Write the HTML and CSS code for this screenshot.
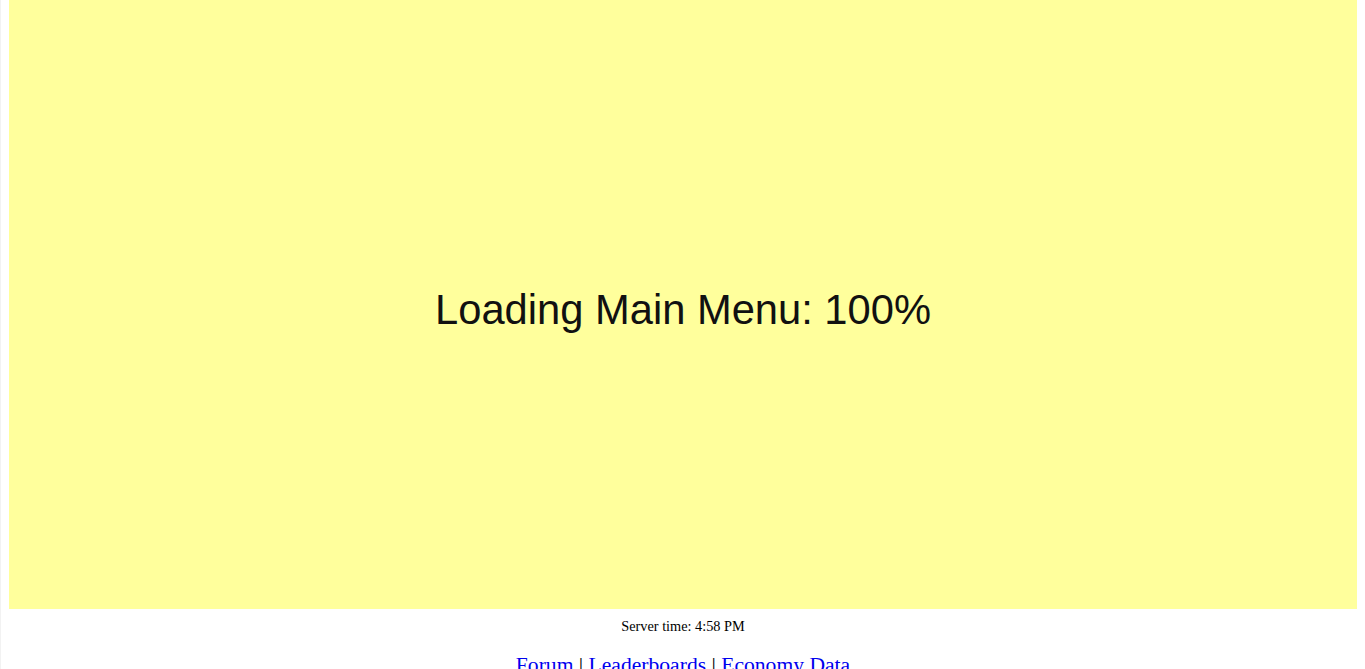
FILE: index.html
```
<!DOCTYPE html>
<html>
<head>
<meta charset="utf-8">
<link rel="stylesheet" href="styles.css">
</head>
<body>
<div class="page">
  <div class="game">
    <div class="loading">Loading Main Menu: 100%</div>
  </div>
  <div class="server-time">Server time: 4:58 PM</div>
  <div class="links">
    <a href="#">Forum</a> | <a href="#">Leaderboards</a> | <a href="#">Economy Data</a>
  </div>
</div>
</body>
</html>
```
FILE: styles.css
```
html, body {
  margin: 0;
  padding: 0;
  background: #ffffff;
}
body {
  font-family: "Liberation Serif", "Times New Roman", serif;
  font-size: 16px;
  color: #000;
  overflow: hidden;
}
.page {
  border-left: 1px solid #f2f2f2;
  padding: 0 8px;
  min-height: 669px;
}
.game {
  height: 609px;
  background: #ffff9c;
  display: flex;
  align-items: center;
  justify-content: center;
}
.loading {
  font-family: "Liberation Sans", Arial, sans-serif;
  font-size: 41.7px;
  color: #111;
  padding-top: 10px;
}
.server-time {
  text-align: center;
  margin-top: 9px;
  font-size: 14.3px;
}
.links {
  text-align: center;
  margin-top: 18px;
  font-size: 21.6px;
}
.links a {
  color: #0000ee;
}
```
